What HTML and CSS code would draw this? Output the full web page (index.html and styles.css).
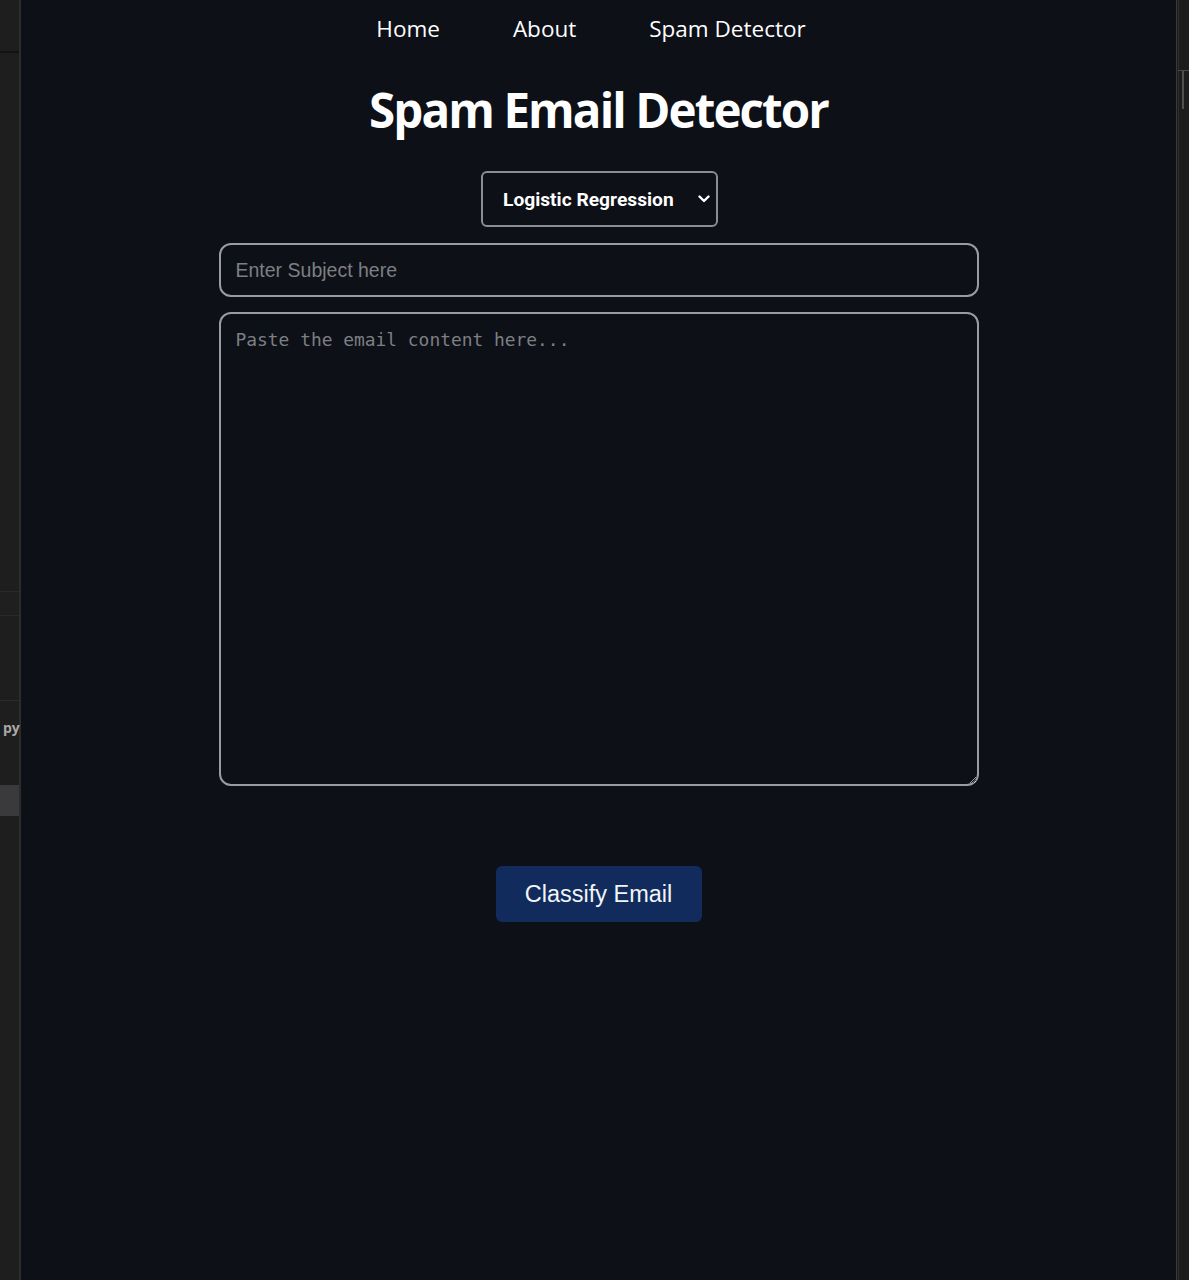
FILE: index.html
```html
<!DOCTYPE html>
<html lang="en">
<head>
<meta charset="utf-8">
<title>Spam Email Detector</title>
<link rel="stylesheet" href="styles.css">
</head>
<body>
<div class="frame">
  <aside class="side-left">
    <div class="sl-top"></div>
    <div class="sl-fill"></div>
    <div class="sl-band"></div>
    <div class="sl-mid"></div>
    <div class="sl-file"><span class="sl-py">py</span></div>
    <div class="sl-gap"></div>
    <div class="sl-sel"></div>
  </aside>
  <main class="app">
    <nav class="nav">
      <a href="#" class="nav-link">Home</a>
      <a href="#" class="nav-link">About</a>
      <a href="#" class="nav-link">Spam Detector</a>
    </nav>
    <h1 class="title">Spam Email Detector</h1>
    <div class="select-wrap">
      <select class="model-select">
        <option>Logistic Regression</option>
        <option>Naive Bayes</option>
        <option>SVM</option>
      </select>
      <svg class="chev" width="12" height="8" viewBox="0 0 12 8"><path d="M1.5 1.5 L6 6 L10.5 1.5" fill="none" stroke="#ffffff" stroke-width="2.4" stroke-linecap="round" stroke-linejoin="round"/></svg>
    </div>
    <input class="subject" type="text" placeholder="Enter Subject here">
    <textarea class="content" placeholder="Paste the email content here..."></textarea>
    <button class="classify" type="button">Classify Email</button>
  </main>
  <aside class="side-right">
    <div class="sr-bar"></div>
  </aside>
</div>
</body>
</html>
```
FILE: styles.css
```css
* { box-sizing: border-box; }
html, body { margin: 0; padding: 0; height: 100%; background: #0d1017; }
.frame { display: flex; height: 1280px; overflow: hidden; }

.side-left {
  width: 21px;
  flex: 0 0 21px;
  background: #1e1e1e;
  border-right: 2px solid #2c2c2c;
  display: flex;
  flex-direction: column;
}
.sl-top { height: 53px; border-bottom: 2px solid #121212; }
.sl-fill { height: 538px; }
.sl-band { height: 25px; border-top: 1px solid #2a2a2a; border-bottom: 1px solid #2a2a2a; background: #1f1f1f; }
.sl-mid { height: 85px; border-bottom: 1px solid #2a2a2a; }
.sl-file { height: 30px; position: relative; }
.sl-py {
  position: absolute; left: 3px; top: 17px;
  font-family: "Open Sans", sans-serif; font-weight: 700; font-size: 14px; color: #a8a8a8;
}
.sl-gap { height: 54px; }
.sl-sel { height: 31px; background: #3a3a3c; }

.side-right {
  width: 13px;
  flex: 0 0 13px;
  background: #1c1c1c;
  border-left: 1px solid #3a3a3a;
  position: relative;
}
.side-right::before {
  content: ""; position: absolute; left: 1px; top: 0; bottom: 0; width: 1px; background: #2e2e2e;
}
.sr-bar {
  position: absolute; left: 1px; right: 0; top: 70px; height: 38px;
  border-top: 1px solid #4a4a4a;
}
.sr-bar::after {
  content: ""; position: absolute; left: 4px; top: 0; width: 2px; height: 38px; background: #4f4f4f;
}

.app {
  flex: 1;
  display: flex;
  flex-direction: column;
  align-items: center;
  background: #0d1017;
  color: #ffffff;
}

.nav {
  display: flex;
  gap: 73px;
  padding-top: 13px;
  height: 60px;
  margin-right: 15px;
}
.nav-link {
  font-family: "Open Sans", sans-serif;
  font-size: 22.5px;
  line-height: 32px;
  color: #ffffff;
  text-decoration: none;
}

.title {
  margin: 20px 0 0;
  font-family: "Open Sans", sans-serif;
  font-weight: 700;
  font-size: 47.5px;
  letter-spacing: -1.9px;
  line-height: 60px;
  height: 60px;
}

.select-wrap { position: relative; margin-top: 31px; margin-left: 2px; }
.model-select {
  appearance: none;
  -webkit-appearance: none;
  width: 237px;
  height: 56px;
  padding: 0 0 0 20px;
  background: #0d1017;
  color: #ffffff;
  border: 2px solid #8b8d92;
  border-radius: 6px;
  font-family: Roboto, sans-serif;
  font-weight: 700;
  font-size: 19.2px;
  outline: none;
}
.chev { position: absolute; right: 8px; top: 24px; pointer-events: none; }

.subject {
  margin-top: 16px;
  width: 760px;
  height: 54px;
  padding: 0 15px;
  background: #0d1017;
  color: #ffffff;
  border: 2px solid #9a9ca0;
  border-radius: 12px;
  font-family: "Liberation Sans", Arial, sans-serif;
  font-size: 19.5px;
  outline: none;
}
.subject::placeholder { color: #7d7f83; }

.content {
  margin-top: 15px;
  width: 760px;
  height: 474px;
  padding: 15px 15px;
  background: #0d1017;
  color: #ffffff;
  border: 2px solid #9a9ca0;
  border-radius: 12px;
  font-family: "DejaVu Sans Mono", monospace;
  font-size: 17.9px;
  line-height: 22px;
  outline: none;
  resize: vertical;
}
.content::placeholder { color: #7d7f83; }

.classify {
  margin-top: 80px;
  width: 206px;
  height: 56px;
  background: #102b5c;
  color: #f2f4f8;
  border: none;
  border-radius: 6px;
  font-family: "Liberation Sans", Arial, sans-serif;
  font-size: 23.5px;
  cursor: pointer;
}
```
